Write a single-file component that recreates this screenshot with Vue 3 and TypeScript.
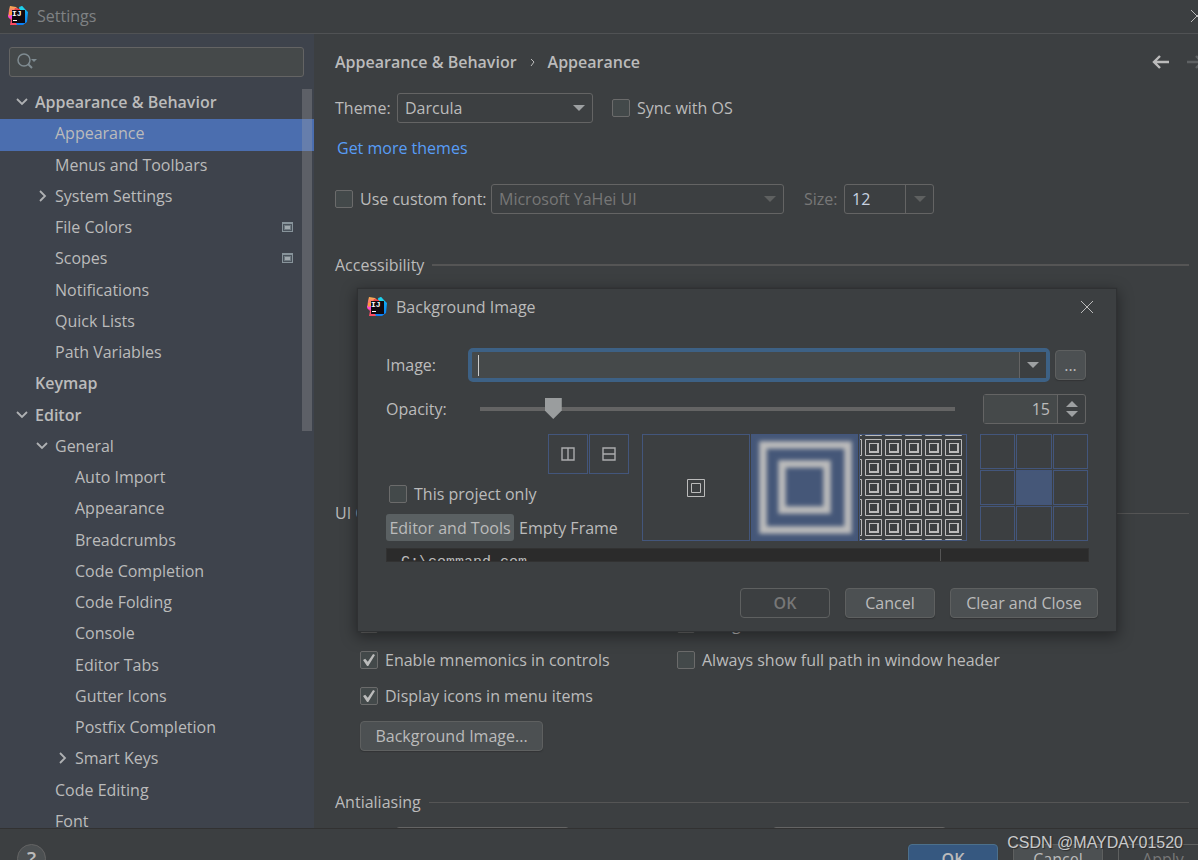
<script setup lang="ts">
import { ref } from 'vue'

interface TreeNode {
  label: string
  level: number
  state?: 'open' | 'closed'
  bold?: boolean
  project?: boolean
}

const nodes: TreeNode[] = [
  { label: 'Appearance & Behavior', level: 0, state: 'open', bold: true },
  { label: 'Appearance', level: 1 },
  { label: 'Menus and Toolbars', level: 1 },
  { label: 'System Settings', level: 1, state: 'closed' },
  { label: 'File Colors', level: 1, project: true },
  { label: 'Scopes', level: 1, project: true },
  { label: 'Notifications', level: 1 },
  { label: 'Quick Lists', level: 1 },
  { label: 'Path Variables', level: 1 },
  { label: 'Keymap', level: 0, bold: true },
  { label: 'Editor', level: 0, state: 'open', bold: true },
  { label: 'General', level: 1, state: 'open' },
  { label: 'Auto Import', level: 2 },
  { label: 'Appearance', level: 2 },
  { label: 'Breadcrumbs', level: 2 },
  { label: 'Code Completion', level: 2 },
  { label: 'Code Folding', level: 2 },
  { label: 'Console', level: 2 },
  { label: 'Editor Tabs', level: 2 },
  { label: 'Gutter Icons', level: 2 },
  { label: 'Postfix Completion', level: 2 },
  { label: 'Smart Keys', level: 2, state: 'closed' },
  { label: 'Code Editing', level: 1 },
  { label: 'Font', level: 1 },
]

const selected = ref(1)
const query = ref('')
const syncOs = ref(false)
const customFont = ref(false)
const fullPath = ref(false)
const mergeMenu = ref(false)
const menuMnemonics = ref(true)
const controlMnemonics = ref(true)
const menuIcons = ref(true)
const fontSize = ref('12')
const image = ref('')
const opacity = ref(15)
const projectOnly = ref(false)
const anchor = ref(5)
</script>

<template>
  <div class="window">
    <svg class="defs" aria-hidden="true">
      <defs>
        <linearGradient id="warm" x1="0" y1="0" x2="0" y2="1">
          <stop offset="0" stop-color="#fdb44b" />
          <stop offset="0.45" stop-color="#f5468f" />
          <stop offset="1" stop-color="#ff4a5c" />
        </linearGradient>
        <linearGradient id="cool" x1="0" y1="0" x2="0" y2="1">
          <stop offset="0" stop-color="#12b8f2" />
          <stop offset="1" stop-color="#0a7df5" />
        </linearGradient>
        <symbol id="logo" viewBox="0 0 20 20">
          <path d="M1 4 2 0 8 1 11 4 10 19 2 19 3 14 0 11Z" fill="url(#warm)" />
          <path d="M0 9 4 7 5 13 1 12Z" fill="#f84ad8" />
          <path d="M1 6 4 5 4 9 1 10Z" fill="#ff9a3c" />
          <path d="M11 1 14 0 20 6 19 16 15 19 9 19 7 15 12 5Z" fill="url(#cool)" />
          <path d="M11 2 14 0 18 5 12 5Z" fill="#20d3e8" />
          <path d="M7 2 12 3 12 5 6 5Z" fill="#e8404c" />
          <path d="M4 4H17V17H4Z" fill="#100a10" />
          <text x="4" y="10" class="logo-text">IJ</text>
          <path d="M5 14H9V15H5Z" fill="#fff" />
        </symbol>
        <symbol id="down" viewBox="0 0 12 8"><path d="M0 1H12L6 7Z" fill="currentColor" /></symbol>
        <symbol id="up" viewBox="0 0 12 8"><path d="M0 7H12L6 1Z" fill="currentColor" /></symbol>
      </defs>
    </svg>

    <header class="titlebar">
      <svg class="logo"><use href="#logo" /></svg>
      <span class="title">Settings</span>
      <button class="icon-button window-close" aria-label="Close settings">
        <svg width="14" height="14" viewBox="0 0 14 14"><path d="M1 1 13 13M13 1 1 13" /></svg>
      </button>
    </header>

    <div class="body">
      <aside class="sidebar">
        <div class="search">
          <svg width="22" height="18" viewBox="0 0 22 18">
            <circle cx="7" cy="7" r="6" fill="none" stroke="#7f8b91" stroke-width="1.5" />
            <path d="M11 11 15 15" stroke="#7f8b91" stroke-width="2" />
            <path d="M14 6H20L17 9Z" fill="#7f8b91" />
          </svg>
          <input v-model="query" type="text" aria-label="Search settings" />
        </div>
        <div class="tree-area">
          <ul class="tree">
            <li
              v-for="(node, i) in nodes"
              :key="i"
              :class="['node', 'level-' + node.level, { bold: node.bold, selected: i === selected }]"
              @click="selected = i"
            >
              <span class="twist">
                <svg v-if="node.state === 'open'" width="12" height="12" viewBox="0 0 12 12"><path d="M1 3 6 8 11 3" /></svg>
                <svg v-else-if="node.state === 'closed'" width="12" height="12" viewBox="0 0 12 12"><path d="M4 1 9 6 4 11" /></svg>
              </span>
              <span class="node-label">{{ node.label }}</span>
              <svg v-if="node.project" class="project" width="11" height="10" viewBox="0 0 11 10">
                <path d="M0 0H11V10H0Z" fill="#87939a" />
                <path d="M1 2H10V9H1Z" fill="#4a525b" />
                <path d="M2 3H9V8H2Z" fill="#6f7a81" />
                <path d="M3 4H8V7H3Z" fill="#a0a8ad" />
              </svg>
            </li>
          </ul>
          <div class="scrollbar"></div>
        </div>
      </aside>

      <main class="content">
        <nav class="crumbs">
          <span>Appearance &amp; Behavior</span>
          <svg width="5" height="9" viewBox="0 0 5 9"><path d="M1 1 4 4 1 8" fill="none" stroke="#bbb" /></svg>
          <span>Appearance</span>
          <button class="icon-button back" aria-label="Back">
            <svg width="18" height="14" viewBox="0 0 18 14"><path d="M8 1 2 7 8 13M2 7H17" /></svg>
          </button>
          <button class="icon-button forward" aria-label="Forward" disabled>
            <svg width="18" height="14" viewBox="0 0 18 14"><path d="M10 1 16 7 10 13M1 7H16" /></svg>
          </button>
        </nav>

        <div class="row theme-row">
          <label class="theme-label" for="theme">Theme:</label>
          <span class="combo theme">
            <select id="theme"><option>Darcula</option></select>
            <svg class="arrow"><use href="#down" /></svg>
          </span>
          <label class="check sync"><input v-model="syncOs" type="checkbox" />Sync with OS</label>
        </div>
        <div class="row link-row"><a href="#themes">Get more themes</a></div>
        <div class="row font-row">
          <label class="check custom"><input v-model="customFont" type="checkbox" />Use custom font:</label>
          <span class="combo font disabled">
            <select aria-label="Custom font" disabled><option>Microsoft YaHei UI</option></select>
            <svg class="arrow"><use href="#down" /></svg>
          </span>
          <label class="dim" for="size">Size:</label>
          <span class="split">
            <input id="size" v-model="fontSize" type="text" />
            <button aria-label="Choose size" disabled><svg class="arrow"><use href="#down" /></svg></button>
          </span>
        </div>

        <h2 class="section thick">Accessibility</h2>
        <h2 class="section options">UI Options</h2>
        <div class="checks">
          <label class="check"><input v-model="menuMnemonics" type="checkbox" /><span>Enable mnemonics in <u>m</u>enu</span></label>
          <label class="check"><input v-model="mergeMenu" type="checkbox" />Merge main menu with window title</label>
          <label class="check"><input v-model="controlMnemonics" type="checkbox" />Enable mnemonics in controls</label>
          <label class="check"><input v-model="fullPath" type="checkbox" />Always show full path in window header</label>
          <label class="check"><input v-model="menuIcons" type="checkbox" />Display icons in menu items</label>
        </div>
        <button class="button background">Background Image...</button>
        <h2 class="section antialiasing">Antialiasing</h2>
        <div class="aa-row">
          <select aria-label="IDE antialiasing"></select>
          <select aria-label="Editor antialiasing"></select>
        </div>
      </main>
    </div>

    <footer class="footer">
      <button class="help" aria-label="Help">?</button>
      <div class="actions">
        <button class="button primary">OK</button>
        <button class="button">Cancel</button>
        <button class="button" disabled>Apply</button>
      </div>
    </footer>

    <section class="dialog" role="dialog" aria-labelledby="dialog-title">
      <div class="dialog-title">
        <svg class="logo"><use href="#logo" /></svg>
        <span id="dialog-title">Background Image</span>
        <button class="icon-button dialog-close" aria-label="Close">
          <svg width="14" height="14" viewBox="0 0 14 14"><path d="M1 1 13 13M13 1 1 13" /></svg>
        </button>
      </div>

      <div class="dialog-body">
        <div class="field-row">
          <label for="image">Image:</label>
          <span class="image-field">
            <span class="caret"></span>
            <input id="image" v-model="image" type="text" />
            <button aria-label="Recent images"><svg class="arrow"><use href="#down" /></svg></button>
          </span>
          <button class="button browse">...</button>
        </div>
        <div class="field-row opacity-row">
          <label for="opacity">Opacity:</label>
          <input id="opacity" v-model.number="opacity" class="slider" type="range" min="1" max="100" />
          <span class="spinner">
            <input v-model.number="opacity" type="text" aria-label="Opacity value" />
            <span class="steps">
              <button aria-label="Increase" @click="opacity++"><svg class="arrow"><use href="#up" /></svg></button>
              <button aria-label="Decrease" @click="opacity--"><svg class="arrow"><use href="#down" /></svg></button>
            </span>
          </span>
        </div>

        <div class="placement">
          <div class="options-col">
            <div class="flips">
              <button aria-label="Flip horizontally">
                <svg width="16" height="16" viewBox="0 0 16 16"><path d="M2 2H14V14H2ZM8 2V14" /></svg>
              </button>
              <button aria-label="Flip vertically">
                <svg width="16" height="16" viewBox="0 0 16 16"><path d="M2 2H14V14H2ZM2 8H14" /></svg>
              </button>
            </div>
            <label class="check project-only"><input v-model="projectOnly" type="checkbox" />This project only</label>
            <div class="tabs">
              <button class="tab active">Editor and Tools</button>
              <button class="tab">Empty Frame</button>
            </div>
          </div>
          <div class="fills">
            <button aria-label="Plain">
              <svg viewBox="0 0 107 107"><path d="M45.500 45.500h17v17h-17zM49.500 49.500h9v9h-9z" fill="none" stroke="#bbb" /></svg>
            </button>
            <button class="chosen" aria-label="Scale">
              <svg viewBox="0 0 107 107">
                <filter id="soft"><feGaussianBlur stdDeviation="2" /></filter>
                <g fill="none" stroke="#bbb" stroke-width="7.500" filter="url(#soft)">
                  <path d="M12 11H97V96H12Z" /><path d="M31 30H76V76H31Z" />
                </g>
              </svg>
            </button>
            <button aria-label="Tile">
              <svg viewBox="0 0 107 107">
                <pattern id="tile" x="6" y="5" width="20" height="20" patternUnits="userSpaceOnUse">
                  <path d="M0.500 0.500H16.500V16.500H0.500Z" fill="none" stroke="#bbb" />
                  <path d="M4 4H14V14H4ZM5 5V12H12V5Z" fill="#bbb" fill-rule="evenodd" />
                </pattern>
                <rect x="1" y="1" width="105" height="105" fill="url(#tile)" />
              </svg>
            </button>
          </div>
          <div class="anchors">
            <button v-for="n in 9" :key="n" :class="{ chosen: n === anchor }" :aria-label="'Anchor ' + n" @click="anchor = n"></button>
          </div>
        </div>

        <div class="preview"><code>C:\command.com</code><span class="margin-line"></span></div>

        <div class="dialog-actions">
          <button class="button" disabled><b>OK</b></button>
          <button class="button">Cancel</button>
          <button class="button wide">Clear and Close</button>
        </div>
      </div>
    </section>

    <div class="watermark">CSDN @MAYDAY01520</div>
  </div>
</template>

<style>
html, body { margin: 0; background: #3c3f41; }
</style>

<style scoped>
.window {
  position: relative;
  display: flex;
  flex-direction: column;
  height: 100vh;
  overflow: hidden;
  background: #3c3f41;
  color: #bbb;
  font: 16px/22px "Open Sans", "Noto Sans", sans-serif;
}
.window * { box-sizing: border-box; }
button, input, select { margin: 0; padding: 0; font: inherit; color: inherit; }
.defs { position: absolute; width: 0; height: 0; }
.logo { width: 20px; height: 20px; flex: none; }
.logo-text { font: bold 8px "Liberation Mono", monospace; fill: #fff; }
.arrow { width: 12px; height: 8px; flex: none; color: #9da0a2; }

.icon-button { display: flex; border: 0; background: none; }
.icon-button path { fill: none; stroke: #bbb; }

.titlebar {
  flex: none;
  display: flex;
  align-items: center;
  height: 34px;
  padding: 0 0 2px 8px;
  border-bottom: 1px solid #505254;
}
.title { margin-left: 9px; color: #7f8284; }
.window-close { margin: 0 -6px 0 auto; }

.body { flex: 1; display: flex; min-height: 0; overflow: hidden; }

.sidebar { flex: 0 0 314px; display: flex; flex-direction: column; background: #3e434c; }
.search {
  flex: none;
  display: flex;
  align-items: center;
  height: 30px;
  margin: 13px 10px 11px 9px;
  padding-left: 7px;
  border: 1px solid #646464;
  border-radius: 3px;
  background: #45494a;
}
.search input { flex: 1; min-width: 0; border: 0; outline: 0; background: none; }
.tree-area { position: relative; flex: 1; min-height: 0; }
.tree {
  display: grid;
  grid-auto-rows: 1fr;
  height: 750px;
  margin: 0;
  padding: 0;
  list-style: none;
}
.node { display: flex; align-items: center; padding: 0 21px 3px 16px; white-space: nowrap; }
.level-1 { padding-left: 36px; }
.level-2 { padding-left: 56px; }
.bold { font-weight: 600; }
.selected { background: #4b6eaf; }
.twist { display: flex; width: 19px; }
.twist path { fill: none; stroke: #afb1b3; stroke-width: 1.8; }
.project { margin-left: auto; }
.scrollbar { position: absolute; top: 1px; right: 2px; width: 10px; height: 342px; background: rgba(166, 166, 166, 0.3); }

.content { flex: 1; min-width: 0; padding: 13px 9px 0 21px; }
.crumbs { display: flex; align-items: center; gap: 13px; height: 30px; font-weight: 600; white-space: nowrap; }
.back { margin-left: auto; }
.back path, .forward path { stroke-width: 2.4; }
.forward { margin: 0 -15px 0 3px; }
.forward path { stroke: #5e6163; }

.row { display: flex; align-items: center; height: 30px; white-space: nowrap; }
.theme-row { margin-top: 16px; }
.theme-label { width: 54px; }
.link-row { margin: 10px 0 21px; padding-left: 2px; }
.link-row a { color: #589df6; text-decoration: none; }
.combo { position: relative; display: flex; height: 30px; }
.combo select {
  width: 100%;
  padding: 0 7px;
  appearance: none;
  border: 1px solid #646464;
  border-radius: 3px;
  background: #3c3f41;
  outline: 0;
  opacity: 1;
}
.combo .arrow { position: absolute; right: 8px; top: 11px; }
.theme { width: 196px; margin-left: 8px; }
.sync { margin-left: 19px; }
.custom { width: 149px; }
.font { width: 293px; margin: 0 20px 0 7px; }
.dim { width: 33px; }
.disabled select, .dim { color: #777; }
.disabled .arrow, .split .arrow { color: #5e6060; }
.split { display: flex; width: 90px; height: 30px; margin-left: 7px; border: 1px solid #646464; border-radius: 3px; }
.split input { flex: 1; min-width: 0; padding: 0 7px; border: 0; outline: 0; background: none; color: #c8d2e0; }
.split button { display: grid; place-items: center; width: 28px; border: 0; border-left: 1px solid #646464; background: none; }

.check { display: flex; align-items: center; gap: 7px; height: 30px; white-space: nowrap; }
.check input {
  flex: none;
  width: 18px;
  height: 18px;
  appearance: none;
  border: 1px solid #6b6b6b;
  border-radius: 2px;
  background: #43494a;
}
.check input:checked { display: grid; place-items: center; }
.check input:checked::after {
  content: "";
  width: 12px;
  height: 12px;
  background: #bbb;
  clip-path: polygon(0 50%, 18% 40%, 40% 64%, 84% 0, 100% 8%, 44% 100%, 34% 100%);
}

.section { display: flex; align-items: center; gap: 8px; height: 30px; margin: 36px 0 0; font: inherit; white-space: nowrap; }
.section::after { content: ""; flex: 1; height: 1px; background: #555; }
.thick::after { height: 2px; }
.options { margin-top: 218px; }
.checks { display: grid; grid-template-columns: 317px 1fr; gap: 6px 0; margin: 81px 0 0 25px; }
.button {
  min-width: 90px;
  height: 30px;
  border: 1px solid #5e6060;
  border-radius: 4px;
  background: #4c5052;
  box-shadow: 0 1px 1px #323436;
}
.button:disabled { background: none; color: #777; box-shadow: none; }
.button b { font-weight: 600; }
.background { display: block; width: 183px; margin: 10px 0 0 25px; }
.aa-row { display: grid; grid-template-columns: 173px 173px; gap: 204px; margin: 10px 0 0 61px; }
.aa-row select { height: 30px; appearance: none; border: 1px solid #646464; border-radius: 3px; background: none; }

.footer {
  flex: none;
  display: flex;
  align-items: flex-start;
  height: 32px;
  padding: 15px 0 0 17px;
  border-top: 1px solid #323232;
  overflow: hidden;
}
.help {
  flex: none;
  width: 29px;
  height: 29px;
  border: 1px solid #646464;
  border-radius: 50%;
  background: #4c5052;
  font-size: 20px;
  font-weight: 600;
}
.actions { display: flex; gap: 15px; margin: 0 -10px 0 auto; }
.primary { border-color: #4c708c; background: #365880; font-weight: 600; }

.dialog {
  position: absolute;
  left: 358px;
  top: 289px;
  width: 758px;
  background: #3c3f41;
  box-shadow: 0 0 1px 1px #2f3133, 0 4px 14px 2px rgba(0, 0, 0, 0.4);
}
.dialog-title { display: flex; align-items: center; height: 36px; padding: 0 22px 0 9px; }
.dialog-title span { margin-left: 9px; }
.dialog-close { margin-left: auto; }
.dialog-body { padding: 23px 18px 13px 28px; }
.field-row { display: flex; align-items: center; height: 34px; padding-right: 12px; }
.field-row label { width: 82px; }
.image-field {
  position: relative;
  display: flex;
  flex: 1;
  height: 34px;
  margin-right: 5px;
  border: 4px solid #3d6185;
  border-radius: 5px;
  background: #45494a;
}
.caret { position: absolute; left: 6px; top: 3px; width: 1px; height: 21px; background: #ccc; }
.image-field input { flex: 1; min-width: 0; border: 0; outline: 0; background: none; }
.image-field button { display: grid; place-items: center; width: 27px; border: 0; border-left: 1px solid #646464; background: #3c3f41; }
.browse { min-width: 31px; }
.opacity-row { height: 30px; margin-top: 12px; }
.slider { flex: 1; min-width: 0; height: 22px; margin: 0 28px 0 12px; appearance: none; background: none; }
.slider::-webkit-slider-runnable-track { height: 4px; background: #646464; }
.slider::-webkit-slider-thumb {
  appearance: none;
  width: 17px;
  height: 21px;
  margin-top: -9px;
  background: #9a9d9e;
  clip-path: polygon(0 0, 100% 0, 100% 60%, 50% 100%, 0 60%);
}
.spinner { display: flex; width: 103px; height: 30px; border: 1px solid #646464; border-radius: 3px; }
.spinner input { flex: 1; min-width: 0; padding: 0 7px; border: 0; outline: 0; background: #45494a; text-align: right; }
.steps { display: flex; flex-direction: column; justify-content: center; gap: 2px; width: 28px; border-left: 1px solid #646464; }
.steps button { display: grid; place-items: center; height: 8px; border: 0; background: none; }

.placement { display: flex; margin-top: 10px; padding-right: 10px; }
.options-col { flex: 1; display: flex; flex-direction: column; min-width: 0; }
.flips { display: flex; justify-content: flex-end; gap: 1px; margin-right: 13px; }
.flips button, .fills button, .anchors button { border: 1px solid #43567c; background: none; }
.flips button { display: grid; place-items: center; width: 40px; height: 40px; }
.flips path { fill: none; stroke: #aaacad; stroke-width: 1.4; }
.project-only { height: 40px; padding-left: 3px; }
.tabs { display: flex; gap: 5px; }
.tab { height: 27px; border: 0; border-radius: 3px; background: none; white-space: nowrap; }
.active { width: 128px; background: #5a6062; }
.fills { display: grid; grid-template-columns: repeat(3, 1fr); gap: 1px; width: 325px; margin-right: 13px; }
.fills button { height: 107px; }
.fills svg { display: block; width: 107px; height: 107px; margin: -1px; }
.anchors { display: grid; grid-template-columns: repeat(3, 1fr); gap: 1px; width: 108px; }
.placement .chosen { background: #455778; }
.preview { position: relative; height: 14px; margin: 7px 9px 0 0; padding-left: 14px; border: 1px solid #323232; background: #2b2b2b; overflow: hidden; }
.preview code { display: block; margin-top: 2px; font: 15px/24px "Liberation Mono", monospace; }
.margin-line { position: absolute; top: 0; right: 147px; width: 1px; height: 100%; background: #555; }
.dialog-actions { display: flex; justify-content: flex-end; gap: 15px; margin-top: 26px; }
.wide { width: 148px; }

.watermark {
  position: absolute;
  right: 15px;
  bottom: 6px;
  color: #c9cacb;
  font: 16px/22px "Liberation Sans", Arial, sans-serif;
  text-shadow: 1px 1px 1px #2b2b2b;
}
</style>
